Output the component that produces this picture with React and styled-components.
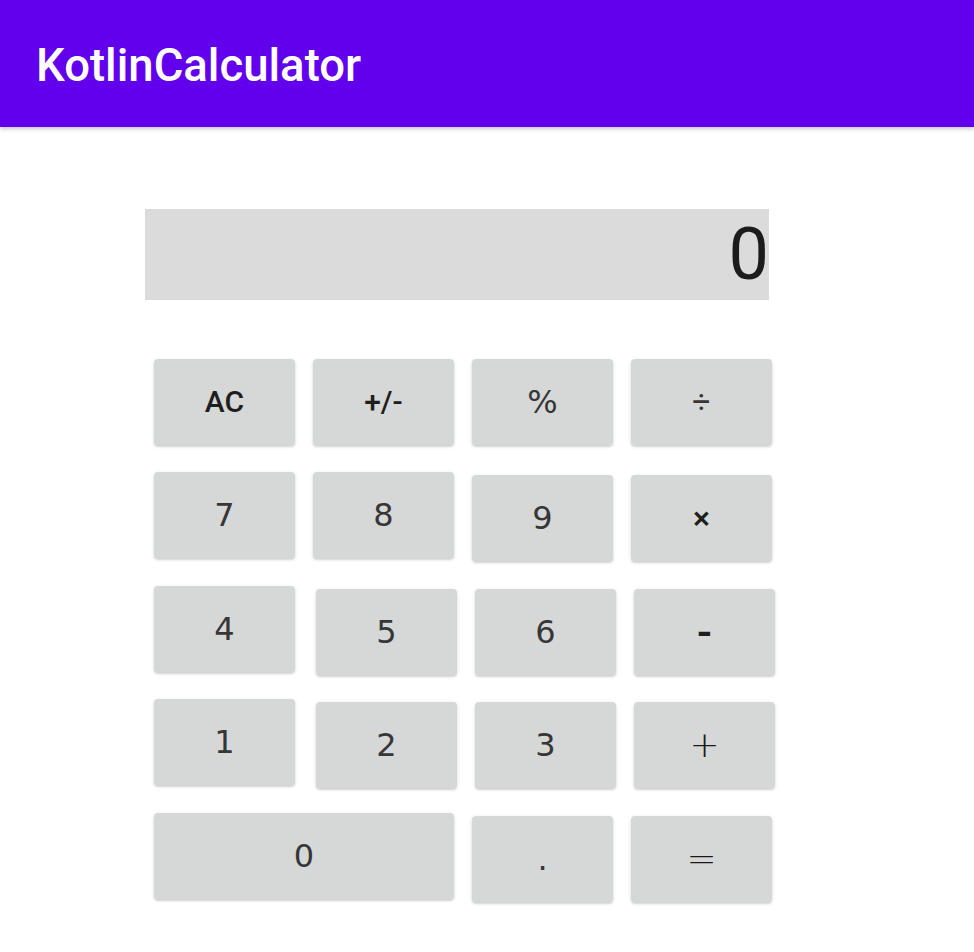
import React from 'react';
import styled, { createGlobalStyle } from 'styled-components';

const GlobalStyle = createGlobalStyle`
  html, body {
    margin: 0;
    padding: 0;
    background: #ffffff;
  }
  body {
    font-family: 'Roboto', 'Liberation Sans', sans-serif;
  }
`

const Screen = styled.div`
  width: 974px;
  min-height: 952px;
  background: #ffffff;
  display: flex;
  flex-direction: column;
`

const AppBar = styled.header`
  height: 127px;
  box-sizing: border-box;
  background: #6200ee;
  display: flex;
  align-items: center;
  padding: 5px 0 0 36px;
  box-shadow: 0 2px 4px rgba(0, 0, 0, 0.22);
  position: relative;
  z-index: 1;
`

const Title = styled.h1`
  margin: 0;
  font-family: 'Roboto', sans-serif;
  font-weight: 500;
  font-size: 45.5px;
  line-height: 1;
  color: #ffffff;
`

const Content = styled.main`
  display: flex;
  flex-direction: column;
  padding: 82px 0 0 145px;
`

const Display = styled.div`
  width: 624px;
  height: 91px;
  background: #dbdbdb;
  display: flex;
  align-items: center;
  justify-content: flex-end;
  font-family: 'Roboto', sans-serif;
  font-size: 72px;
  line-height: 1;
  color: #1c1c1c;
`

const Keypad = styled.div`
  display: flex;
  flex-direction: column;
  padding-left: 9px;
  padding-top: 59px;
`

const Row = styled.div`
  display: flex;
  align-items: flex-start;
  gap: 18px;
  height: 86px;
  margin-top: ${p => p.$top || 0}px;
`

const faces = {
  medium: { family: "'Roboto', sans-serif", weight: 500, color: '#1e1e1e' },
  plain: { family: "'Roboto', sans-serif", weight: 400, color: '#363636' },
  thin: { family: "'DejaVu Sans', sans-serif", weight: 200, color: '#1a1a1a' },
  digit: { family: "'DejaVu Sans', sans-serif", weight: 400, color: '#363636' },
}

const Key = styled.button`
  width: ${p => (p.$wide ? 300 : 141)}px;
  height: 86px;
  flex: none;
  border: none;
  border-radius: 4px;
  background: #d6d7d7;
  color: ${p => faces[p.$kind].color};
  box-shadow: 0 2px 2px rgba(0, 0, 0, 0.12), 0 1px 4px rgba(0, 0, 0, 0.1);
  margin-top: ${p => p.$dy || 0}px;
  margin-left: ${p => p.$dx || 0}px;
  display: flex;
  align-items: center;
  justify-content: center;
  padding: 0;
  font-family: ${p => faces[p.$kind].family};
  font-weight: ${p => faces[p.$kind].weight};
  font-size: ${p => p.$size || 32}px;
  line-height: 1;
  cursor: pointer;
`

const rows = [
  { top: 0, keys: [
    { label: 'AC', kind: 'medium', size: 30 },
    { label: '+/-', kind: 'medium', size: 30 },
    { label: '%' },
    { label: '÷', kind: 'plain', size: 32 },
  ] },
  { top: 27, keys: [
    { label: '7' },
    { label: '8' },
    { label: '9', dy: 3 },
    { label: '×', kind: 'medium', size: 32, dy: 3 },
  ] },
  { top: 28, keys: [
    { label: '4' },
    { label: '5', dx: 3, dy: 3 },
    { label: '6', dy: 3 },
    { label: '-', kind: 'medium', size: 44, dy: 3 },
  ] },
  { top: 27, keys: [
    { label: '1' },
    { label: '2', dx: 3, dy: 3 },
    { label: '3', dy: 3 },
    { label: '+', kind: 'thin', size: 36, dy: 3 },
  ] },
  { top: 28, keys: [
    { label: '0', wide: true },
    { label: '.', dy: 3 },
    { label: '=', kind: 'thin', size: 36, dy: 3 },
  ] },
]

const App = () => {
  return (
    <Screen>
      <GlobalStyle />
      <AppBar>
        <Title>KotlinCalculator</Title>
      </AppBar>
      <Content>
        <Display>0</Display>
        <Keypad>
          {rows.map((row, i) => (
            <Row key={i} $top={row.top}>
              {row.keys.map(k => (
                <Key
                  key={k.label}
                  $wide={k.wide}
                  $kind={k.kind || 'digit'}
                  $size={k.size}
                  $dx={k.dx}
                  $dy={k.dy}
                >
                  {k.label}
                </Key>
              ))}
            </Row>
          ))}
        </Keypad>
      </Content>
    </Screen>
  )
}

export default App;
